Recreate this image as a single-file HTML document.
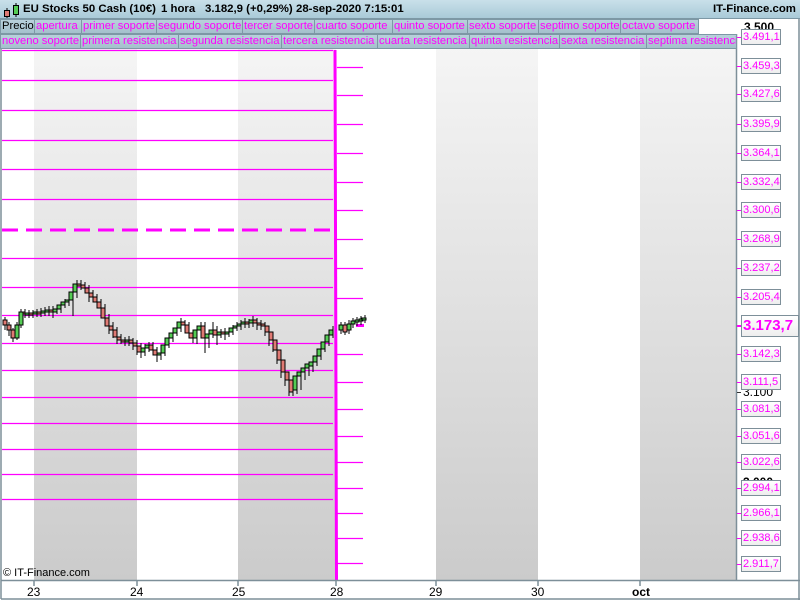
<!DOCTYPE html>
<html><head><meta charset="utf-8"><style>
*{margin:0;padding:0;box-sizing:border-box}
body{width:800px;height:600px;position:relative;background:#fff;overflow:hidden;font-family:"Liberation Sans",sans-serif}
#hdr{position:absolute;left:0;top:0;width:800px;height:19px;background:linear-gradient(#c9e0ea,#a9cad8);border-bottom:1px solid #7d98a5}
#hdr .t{position:absolute;top:3px;font-size:11.4px;font-weight:bold;color:#000;white-space:pre}
.row{position:absolute;left:0;height:15px}
.c{position:absolute;top:0;height:15px;background:linear-gradient(#b9d1dc,#a4c0cc);border:1px solid #7d98a5;color:#ff00ff;font-size:11.2px;line-height:13px;padding-left:1px;white-space:nowrap;overflow:hidden}
.lb{position:absolute;left:741px;width:40px;height:16px;border:1px solid #7d8f99;background:linear-gradient(#fff,#eee);color:#ff00ff;font-size:11px;line-height:14px;padding-left:1px;white-space:nowrap;overflow:hidden}
.tk{position:absolute;left:737px;width:4px;height:1px;background:#ff00ff}
.ax{position:absolute;font-size:12px;color:#000}
</style></head><body>
<svg width="800" height="600" style="position:absolute;left:0;top:0">
<defs><linearGradient id="sh" x1="0" y1="0" x2="0" y2="1"><stop offset="0" stop-color="#f6f6f6"/><stop offset="1" stop-color="#cbcbcb"/></linearGradient></defs>
<rect x="34" y="34" width="103" height="546" fill="url(#sh)"/>
<rect x="238" y="34" width="98" height="546" fill="url(#sh)"/>
<rect x="436" y="34" width="102" height="546" fill="url(#sh)"/>
<rect x="640" y="34" width="97" height="546" fill="url(#sh)"/>
<g stroke="#ff00ff" stroke-width="1.2">
<path d="M2 50.5H333M2 80.5H333M2 110.5H333M2 140.5H333M2 169.5H333M2 199.5H333M2 258.5H333M2 287.5H333M2 315.5H333M2 343.5H333M2 370.5H333M2 397.5H333M2 423.5H333M2 449.5H333M2 474.5H333M2 499.5H333"/>
<path d="M337 67.5H363M337 95.5H363M337 124.5H363M337 153.5H363M337 182.5H363M337 210.5H363M337 239.5H363M337 268.5H363M337 298.5H363M337 354.5H363M337 382.5H363M337 409.5H363M337 436.5H363M337 462.5H363M337 488.5H363M337 513.5H363M337 538.5H363M337 563.5H363"/>
</g>
<path d="M2 230H333" stroke="#ff00ff" stroke-width="3" stroke-dasharray="16,8"/>
<path d="M356 325.5H364" stroke="#ff00ff" stroke-width="3"/>
<path d="M335 50L336.5 580" stroke="#ff00ff" stroke-width="3"/>
<g stroke="#000" stroke-width="1">
<path d="M5 317V330M9 322V336M13 328V342M17 322V340M21 309V328M25 309V318M29 310V318M33 310V318M37 309V317M41 308V317M45 307V316M49 306V316M53 306V318M57 305V314M61 302V313M65 299V308M69 296V306M73 288V316M77 280V298M81 280V290M85 282V292M89 285V302M93 290V300M97 294V306M101 299V312M105 304V322M109 314V334M113 322V338M117 327V344M121 334V344M125 337V346M129 336V346M133 338V350M137 340V355M141 343V358M145 344V356M149 342V352M153 342V354M157 347V362M161 350V360M165 342V356M169 335V348M173 330V342M177 324V336M181 318V332M185 320V330M189 322V336M193 330V343M197 326V344M201 322V335M205 322V353M209 330V348M213 322V338M217 326V345M221 329V338M225 328V340M229 328V337M233 325V335M237 322V331M241 320V330M245 318V328M249 319V328M253 316V327M257 318V330M261 320V330M265 322V336M269 328V346M273 336V352M277 346V364M281 356V378M285 368V386M289 376V396M293 386V396M297 384V394M301 372V390M305 368V380M309 364V376M313 358V372M317 352V366M321 345V360M325 338V352M329 332V346M333 326V338M341 322V334M345 322V335M349 320V334M353 318V328M357 317V326M361 316V325M365 315V323"/>
<g fill="#e07a74"><rect x="3" y="320" width="4" height="5"/><rect x="7" y="325" width="4" height="5"/><rect x="11" y="330" width="4" height="8"/><rect x="21" y="312" width="4" height="2"/><rect x="29" y="313" width="4" height="2"/><rect x="37" y="312" width="4" height="2"/><rect x="49" y="310" width="4" height="2"/><rect x="77" y="284" width="4" height="2"/><rect x="81" y="285" width="4" height="3"/><rect x="85" y="288" width="4" height="5"/><rect x="89" y="293" width="4" height="4"/><rect x="93" y="297" width="4" height="5"/><rect x="97" y="302" width="4" height="6"/><rect x="101" y="308" width="4" height="10"/><rect x="105" y="318" width="4" height="8"/><rect x="109" y="326" width="4" height="4"/><rect x="113" y="330" width="4" height="7"/><rect x="117" y="337" width="4" height="3"/><rect x="121" y="340" width="4" height="2"/><rect x="129" y="340" width="4" height="3"/><rect x="133" y="343" width="4" height="3"/><rect x="137" y="346" width="4" height="6"/><rect x="149" y="345" width="4" height="5"/><rect x="153" y="350" width="4" height="5"/><rect x="181" y="322" width="4" height="3"/><rect x="185" y="325" width="4" height="8"/><rect x="189" y="333" width="4" height="5"/><rect x="201" y="326" width="4" height="12"/><rect x="213" y="330" width="4" height="5"/><rect x="221" y="332" width="4" height="2"/><rect x="245" y="322" width="4" height="2"/><rect x="253" y="320" width="4" height="3"/><rect x="257" y="323" width="4" height="2"/><rect x="261" y="324" width="4" height="2"/><rect x="265" y="326" width="4" height="6"/><rect x="269" y="332" width="4" height="8"/><rect x="273" y="340" width="4" height="10"/><rect x="277" y="350" width="4" height="10"/><rect x="281" y="360" width="4" height="12"/><rect x="285" y="372" width="4" height="8"/><rect x="289" y="380" width="4" height="12"/><rect x="343" y="325" width="4" height="7"/></g>
<g fill="#55cc55"><rect x="15" y="325" width="4" height="13"/><rect x="19" y="312" width="4" height="13"/><rect x="25" y="313" width="4" height="2"/><rect x="33" y="312" width="4" height="2"/><rect x="41" y="311" width="4" height="2"/><rect x="45" y="310" width="4" height="2"/><rect x="53" y="309" width="4" height="3"/><rect x="57" y="305" width="4" height="4"/><rect x="61" y="302" width="4" height="3"/><rect x="65" y="300" width="4" height="2"/><rect x="69" y="292" width="4" height="8"/><rect x="73" y="284" width="4" height="8"/><rect x="125" y="340" width="4" height="2"/><rect x="141" y="348" width="4" height="4"/><rect x="145" y="345" width="4" height="3"/><rect x="157" y="353" width="4" height="2"/><rect x="161" y="345" width="4" height="8"/><rect x="165" y="338" width="4" height="7"/><rect x="169" y="333" width="4" height="5"/><rect x="173" y="328" width="4" height="5"/><rect x="177" y="322" width="4" height="6"/><rect x="193" y="330" width="4" height="8"/><rect x="197" y="326" width="4" height="4"/><rect x="205" y="334" width="4" height="4"/><rect x="209" y="330" width="4" height="4"/><rect x="217" y="332" width="4" height="3"/><rect x="225" y="332" width="4" height="2"/><rect x="229" y="328" width="4" height="4"/><rect x="233" y="326" width="4" height="2"/><rect x="237" y="324" width="4" height="2"/><rect x="241" y="322" width="4" height="2"/><rect x="249" y="320" width="4" height="3"/><rect x="293" y="376" width="4" height="14"/><rect x="297" y="372" width="4" height="4"/><rect x="301" y="368" width="4" height="4"/><rect x="305" y="364" width="4" height="4"/><rect x="309" y="362" width="4" height="4"/><rect x="313" y="356" width="4" height="6"/><rect x="317" y="349" width="4" height="7"/><rect x="321" y="342" width="4" height="7"/><rect x="325" y="335" width="4" height="7"/><rect x="329" y="330" width="4" height="5"/><rect x="339" y="325" width="4" height="5"/><rect x="347" y="324" width="4" height="6"/><rect x="351" y="321" width="4" height="3"/><rect x="355" y="320" width="4" height="2"/><rect x="359" y="319" width="4" height="2"/><rect x="362" y="318" width="4" height="2"/></g>
</g>
<g fill="none" stroke="#7d8f99" stroke-width="1.5">
<path d="M1 19V599M736.5 34V580.5M1 580.5H800M799 19V600M1 599H800"/>
<path d="M34 580V586M137 580V586M238 580V586M336 580V586M436 580V586M538 580V586M640 580V586"/>
</g>
<path d="M737 297.5H741" stroke="#333"/>
<path d="M737 392.5H741" stroke="#333"/>
</svg>
<div id="hdr">
<svg width="20" height="19" style="position:absolute;left:2px;top:0"><path d="M5 8V18M14 3V17" stroke="#000"/><rect x="2.5" y="10.5" width="5" height="6" fill="#e07a74" stroke="#000"/><rect x="11.5" y="5.5" width="5" height="9" fill="#55cc55" stroke="#000"/></svg>
<span class="t" style="left:23px">EU Stocks 50 Cash (10€)</span>
<span class="t" style="left:161px">1 hora</span>
<span class="t" style="left:205px">3.182,9 (+0,29%)</span>
<span class="t" style="left:296px">28-sep-2020 7:15:01</span>
<span class="t" style="left:713px">IT-Finance.com</span>
</div>
<div class="row" style="top:19px">
<div class="c" style="left:0;width:35px;color:#000">Precio</div>
<div class="c" style="left:34px;width:48px">apertura</div>
<div class="c" style="left:81px;width:76px">primer soporte</div>
<div class="c" style="left:156px;width:87px">segundo soporte</div>
<div class="c" style="left:242px;width:73px">tercer soporte</div>
<div class="c" style="left:314px;width:79px">cuarto soporte</div>
<div class="c" style="left:392px;width:76px">quinto soporte</div>
<div class="c" style="left:467px;width:72px">sexto soporte</div>
<div class="c" style="left:538px;width:83px">septimo soporte</div>
<div class="c" style="left:620px;width:79px">octavo soporte</div>
</div>
<div class="row" style="top:34px">
<div class="c" style="left:0;width:81px">noveno soporte</div>
<div class="c" style="left:80px;width:99px">primera resistencia</div>
<div class="c" style="left:178px;width:104px">segunda resistencia</div>
<div class="c" style="left:281px;width:97px">tercera resistencia</div>
<div class="c" style="left:377px;width:93px">cuarta resistencia</div>
<div class="c" style="left:469px;width:91px">quinta resistencia</div>
<div class="c" style="left:559px;width:88px">sexta resistencia</div>
<div class="c" style="left:646px;width:91px">septima resistencia</div>
</div>
<div class="ax" style="left:744px;top:20px;font-weight:bold;height:10px;overflow:hidden">3.500</div>
<div class="ax" style="left:743px;top:385px">3.100</div>
<div class="ax" style="left:743px;top:475px;font-weight:bold">3.000</div>
<div class="tk" style="top:37px"></div><div class="lb" style="top:29px">3.491,1</div>
<div class="tk" style="top:66px"></div><div class="lb" style="top:58px">3.459,3</div>
<div class="tk" style="top:94px"></div><div class="lb" style="top:86px">3.427,6</div>
<div class="tk" style="top:124px"></div><div class="lb" style="top:116px">3.395,9</div>
<div class="tk" style="top:153px"></div><div class="lb" style="top:145px">3.364,1</div>
<div class="tk" style="top:182px"></div><div class="lb" style="top:174px">3.332,4</div>
<div class="tk" style="top:210px"></div><div class="lb" style="top:202px">3.300,6</div>
<div class="tk" style="top:239px"></div><div class="lb" style="top:231px">3.268,9</div>
<div class="tk" style="top:268px"></div><div class="lb" style="top:260px">3.237,2</div>
<div class="tk" style="top:297px"></div><div class="lb" style="top:289px">3.205,4</div>
<div class="tk" style="top:325px;height:2px"></div><div class="lb" style="top:315px;width:58px;height:22px;font-size:15px;font-weight:bold;line-height:20px">3.173,7</div>
<div class="tk" style="top:354px"></div><div class="lb" style="top:346px">3.142,3</div>
<div class="tk" style="top:382px"></div><div class="lb" style="top:374px">3.111,5</div>
<div class="tk" style="top:409px"></div><div class="lb" style="top:401px">3.081,3</div>
<div class="tk" style="top:436px"></div><div class="lb" style="top:428px">3.051,6</div>
<div class="tk" style="top:462px"></div><div class="lb" style="top:454px">3.022,6</div>
<div class="tk" style="top:488px"></div><div class="lb" style="top:480px">2.994,1</div>
<div class="tk" style="top:513px"></div><div class="lb" style="top:505px">2.966,1</div>
<div class="tk" style="top:538px"></div><div class="lb" style="top:530px">2.938,6</div>
<div class="tk" style="top:564px"></div><div class="lb" style="top:556px">2.911,7</div>
<div class="ax" style="left:3px;top:567px;font-size:11px">© IT-Finance.com</div>
<div class="ax" style="left:27px;top:585px">23</div>
<div class="ax" style="left:130px;top:585px">24</div>
<div class="ax" style="left:232px;top:585px">25</div>
<div class="ax" style="left:330px;top:585px">28</div>
<div class="ax" style="left:429px;top:585px">29</div>
<div class="ax" style="left:531px;top:585px">30</div>
<div class="ax" style="left:632px;top:585px;font-weight:bold">oct</div>
</body></html>
